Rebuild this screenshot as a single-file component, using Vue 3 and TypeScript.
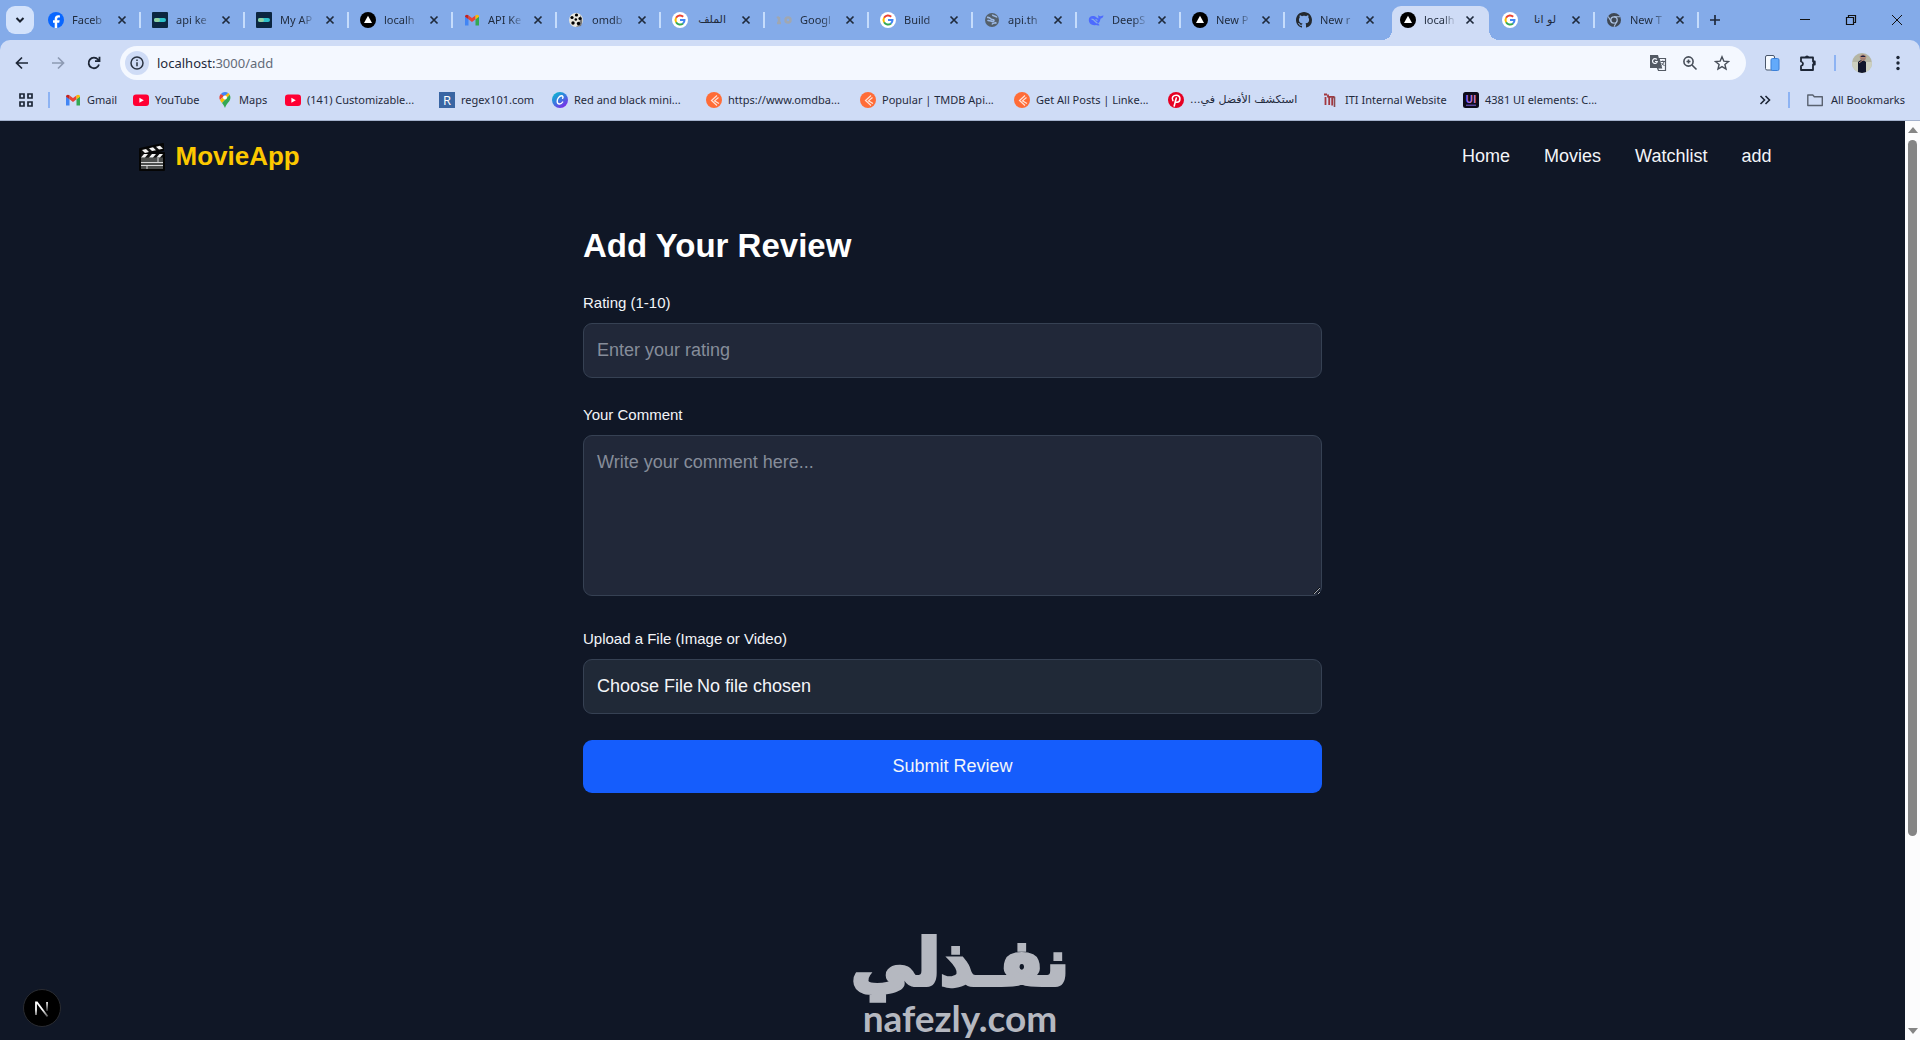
<script setup lang="ts">
import { ref } from 'vue'

interface Tab {
  title: string
  icon: string
  active?: boolean
  rtl?: boolean
}

interface Bookmark {
  title: string
  icon: string
  width: number
  rtl?: boolean
}

const tabs: Tab[] = [
  { title: 'Faceb', icon: 'facebook' },
  { title: 'api ke', icon: 'tmdb' },
  { title: 'My AP', icon: 'tmdb' },
  { title: 'localh', icon: 'vercel' },
  { title: 'API Ke', icon: 'gmail' },
  { title: 'omdb', icon: 'reel' },
  { title: 'الملف', icon: 'google', rtl: true },
  { title: 'Googl', icon: 'faded' },
  { title: 'Build', icon: 'google' },
  { title: 'api.th', icon: 'globe' },
  { title: 'DeepS', icon: 'whale' },
  { title: 'New P', icon: 'vercel' },
  { title: 'New r', icon: 'github' },
  { title: 'localh', icon: 'vercel', active: true },
  { title: 'لو انا', icon: 'google', rtl: true },
  { title: 'New T', icon: 'chrome' },
]

const bookmarks: Bookmark[] = [
  { title: 'Gmail', icon: 'gmail', width: 68 },
  { title: 'YouTube', icon: 'youtube', width: 84 },
  { title: 'Maps', icon: 'maps', width: 68 },
  { title: '(141) Customizable...', icon: 'youtube', width: 154 },
  { title: 'regex101.com', icon: 'regex', width: 113 },
  { title: 'Red and black mini...', icon: 'canva', width: 154 },
  { title: 'https://www.omdba...', icon: 'postman', width: 154 },
  { title: 'Popular | TMDB Api...', icon: 'postman', width: 154 },
  { title: 'Get All Posts | Linke...', icon: 'postman', width: 154 },
  { title: 'استكشف الأفضل في...', icon: 'pinterest', width: 155, rtl: true },
  { title: 'ITI Internal Website', icon: 'iti', width: 140 },
  { title: '4381 UI elements: C...', icon: 'uiverse', width: 154 },
]

const icons: Record<string, string> = {
  facebook:
    '<circle cx="8" cy="8" r="8" fill="#0866ff"/><path d="M6.7 16v-5.300H5V8.200h1.700V7.100C6.700 4.400 7.900 3.200 10.400 3.200c.5 0 1.100.1 1.500.2v2.200h-1c-1.300 0-1.700.5-1.700 1.600v1h2.500l-.5 2.500h-2V16z" fill="#fff"/>',
  tmdb:
    '<rect width="16" height="16" rx="1" fill="#0b2540"/><rect x="2" y="6" width="12" height="4" rx="2" fill="#2ec0c9"/><rect x="2" y="6" width="6" height="4" rx="2" fill="#90cea1"/>',
  vercel: '<circle cx="8" cy="8" r="8" fill="#000"/><path d="M8 3.800 12 11H4z" fill="#fff"/>',
  gmail:
    '<path d="M1 13.500V4.500l3.500 2.600v6.400z" fill="#4285f4"/><path d="M11.500 13.500V7.100L15 4.500v9z" fill="#34a853"/><path d="M4.500 7.300V3.500L8 6.100l3.500-2.600v3.800L8 9.900z" fill="#ea4335"/><path d="M1 4.500c0-1.700 2-2.500 3.500-1.200v3.900L1 4.700z" fill="#c5221f"/><path d="M15 4.500c0-1.700-2-2.500-3.500-1.200v3.900L15 4.700z" fill="#fbbc04"/>',
  reel:
    '<circle cx="8" cy="8" r="7" fill="#e8e6de"/><path d="M12 3q4 5 1 11l-5 1q5-4 4-12z" fill="#777"/><circle cx="4" cy="5.500" r="1.600"/><circle cx="8.500" cy="3" r="1.600"/><circle cx="7.800" cy="7.500" r="1.300"/><circle cx="12" cy="6.500" r="1.600"/><circle cx="5" cy="11" r="1.700"/><circle cx="10.500" cy="11.500" r="1.700"/>',
  google:
    '<circle cx="8" cy="8" r="8" fill="#fff"/><g fill="none" stroke-width="2"><path d="M11.200 4.800A4.500 4.500 0 0 0 4.100 5.800" stroke="#ea4335"/><path d="M4.100 5.800a4.500 4.500 0 0 0 0 4.400" stroke="#fbbc05"/><path d="M4.100 10.200a4.500 4.500 0 0 0 6.900 1.200" stroke="#34a853"/><path d="M8 8h4.500a4.500 4.500 0 0 1-1.500 3.400" stroke="#4285f4"/></g>',
  faded:
    '<g fill="none" stroke="#a7a7a4" stroke-width="2.500" opacity=".8"><path d="M3 5v6M1 6l2-1M1 11h4"/><circle cx="12" cy="8" r="2.500"/></g>',
  globe:
    '<circle cx="8" cy="8" r="7" fill="#54606b"/><path d="M3 5.500c2-.5 3 .5 4 1.500s3 0 3 1.500-2 1-3 .5-2.500 0-3.500-.8M8.500 2.500c0 2 3.500 1 4.500 3M8 12.500c1-2 3-1 4.500-2" stroke="#9cb9e6" stroke-width="1.600" fill="none"/>',
  whale:
    '<path d="M.8 8C.8 4.800 3 3.500 6 4c2 .4 2.500 2 4.500 2.500 0-1.500-.5-2-.3-3.500.8 1 1.800 1.500 2.800 1.200.8-.3 1.500-.8 2.500-.7-.3 1.800-1.500 3-3 3.200-.3 2.300-1.200 4-2.500 5 .8.300 1.200.8 1.500 1.500-1.200.4-2.500.2-3.500-.2C4 14 .8 11.500.8 8z" fill="#4d6bfe"/><path d="M3.500 7.200c3 0 4 3.500 6 4M7.500 7.500c1 0 1.500.5 1.800 1.300" stroke="#84abe9" stroke-width="1.200" fill="none"/>',
  github:
    '<path fill="#24292f" d="M8 0C3.580 0 0 3.580 0 8c0 3.540 2.290 6.530 5.470 7.590.4.070.55-.17.55-.38 0-.19-.01-.82-.01-1.490-2.010.37-2.530-.49-2.690-.94-.09-.23-.48-.94-.82-1.130-.28-.15-.68-.52-.01-.53.63-.01 1.080.58 1.230.82.72 1.210 1.870.87 2.330.66.070-.52.280-.87.510-1.070-1.780-.2-3.640-.89-3.640-3.950 0-.87.310-1.590.82-2.150-.08-.2-.36-1.020.080-2.120 0 0 .67-.21 2.200.82.640-.18 1.320-.27 2-.27s1.360.09 2 .27c1.530-1.040 2.200-.82 2.200-.82.440 1.100.160 1.920.080 2.120.510.560.820 1.270.820 2.150 0 3.070-1.870 3.750-3.650 3.950.290.250.540.730.540 1.480 0 1.070-.01 1.930-.01 2.200 0 .21.150.46.550.38A8.010 8.010 0 0 0 16 8c0-4.420-3.580-8-8-8z"/>',
  chrome:
    '<circle cx="8" cy="8" r="7" fill="#3f4854"/><circle cx="8" cy="8" r="3.200" fill="none" stroke="#a9bfdf" stroke-width="1.300"/><path d="M8 4.800h6M5.200 9.600 2.200 4.500M10.800 9.600 8 14.800" stroke="#a9bfdf" stroke-width="1.100"/>',
  youtube: '<rect y="2.500" width="16" height="11.500" rx="3" fill="#ff0033"/><path d="M6.400 5.700 10.800 8.200 6.400 10.700z" fill="#fff"/>',
  maps:
    '<path d="M8 0a5.500 5.500 0 0 0-4.200 2L8 5.500l3.200-4.400A5.500 5.500 0 0 0 8 0z" fill="#4285f4"/><path d="M3.800 2A5.500 5.500 0 0 0 3 8l4-4z" fill="#ea4335"/><path d="M3 8c.5 1.200 1.200 2 2 3l7.800-8.300A5.500 5.500 0 0 0 11.200 1.100z" fill="#fbbc04"/><path d="M5 11c1.500 2 2.200 3 3 5 .8-2.500 1.500-3.500 3-5.300 2.300-2.500 3.200-4.700 1.800-8z" fill="#34a853"/><circle cx="8" cy="5.400" r="2" fill="#fff"/>',
  regex:
    '<rect width="16" height="16" fill="#3965a3"/><text x="8" y="13" text-anchor="middle" font-family="Open Sans, sans-serif" font-size="13" fill="#fff">R</text>',
  canva:
    '<defs><linearGradient id="cv" x1="0" y1="0" x2=".7" y2="1"><stop offset="0" stop-color="#00c4cc"/><stop offset=".55" stop-color="#3a78e0"/><stop offset="1" stop-color="#7d2ae8"/></linearGradient></defs><circle cx="8" cy="8" r="8" fill="url(#cv)"/><path d="M10.600 6.300c.8-1 .4-2.500-1.100-2.500-2.200 0-4.300 3-4.300 5.400 0 3.800 3.800 3.500 5.500.8" fill="none" stroke="#fff" stroke-width="1.400" stroke-linecap="round"/>',
  postman:
    '<circle cx="8" cy="8" r="8" fill="#ff6c37"/><path d="M11 3.500 5.500 8.500l5.500 5M12.500 5.500 8.500 8.800l4.500 2.700" fill="none" stroke="#ffe3d8" stroke-width="1.200"/>',
  pinterest:
    '<circle cx="8" cy="8" r="8" fill="#e60023"/><path d="M4.900 8.600C3 5.200 5.500 3.300 8.200 3.300c5.300 0 4.300 7 .8 7-1 0-1.600-.6-1.700-1.200M8.300 6 6.200 14" fill="none" stroke="#fff" stroke-width="1.600" stroke-linecap="round"/>',
  iti:
    '<path d="M2.500 5v8M1 2.500h3M5 4.800h6.500M6.200 5v8M9.200 6v7.500M5 2.500v3" fill="none" stroke="#a2373f" stroke-width="1.800"/><path d="M8.500 5.500h3v9.500" fill="none" stroke="#8b4a50" stroke-width="1.600"/>',
  uiverse:
    '<defs><linearGradient id="uv" x1="0" x2="1"><stop offset="0" stop-color="#8a63ff"/><stop offset="1" stop-color="#e07fb0"/></linearGradient></defs><rect width="16" height="16" rx="2.500" fill="#0d0b1a"/><text x="8" y="11" text-anchor="middle" font-family="Open Sans, sans-serif" font-weight="700" font-size="10" fill="url(#uv)">UI</text><path d="M3 13.200h10" stroke="#7a63d8" stroke-width="1"/>',
}

const links = ['Home', 'Movies', 'Watchlist', 'add']
const rating = ref('')
const comment = ref('')
</script>

<template>
  <div class="window">
    <header class="chrome">
      <div class="tabstrip">
        <button class="tab-search" aria-label="Search tabs">
          <svg width="16" height="16" viewBox="0 0 16 16"><path d="M4.500 6 8 9.500 11.500 6" fill="none" stroke="#1a2230" stroke-width="2" /></svg>
        </button>
        <div class="tabs">
          <div
            v-for="(tab, i) in tabs"
            :key="i"
            class="tab"
            :class="{ active: tab.active, bare: tab.active || tabs[i + 1]?.active }"
          >
            <svg class="favicon" width="16" height="16" viewBox="0 0 16 16" v-html="icons[tab.icon]"></svg>
            <span class="tab-title" :class="{ rtl: tab.rtl }" :dir="tab.rtl ? 'rtl' : 'ltr'">{{ tab.title }}</span>
            <button class="tab-close" aria-label="Close tab">
              <svg width="10" height="10" viewBox="0 0 10 10"><path d="M1.500 1.500l7 7M8.500 1.500l-7 7" stroke="#1f2a3c" stroke-width="1.700" /></svg>
            </button>
          </div>
        </div>
        <button class="new-tab" aria-label="New tab">
          <svg width="12" height="12" viewBox="0 0 12 12"><path d="M6 1v10M1 6h10" stroke="#1f2a3c" stroke-width="1.700" /></svg>
        </button>
        <div class="window-controls">
          <button aria-label="Minimize"><svg width="12" height="12" viewBox="0 0 12 12"><path d="M1 5.500h10" stroke="#111" /></svg></button>
          <button aria-label="Restore"><svg width="12" height="12" viewBox="0 0 12 12"><path d="M1.500 3.500h7v7h-7zM3.500 3.500v-2h7v7h-2" fill="none" stroke="#111" stroke-width="1.200" /></svg></button>
          <button aria-label="Close window"><svg width="12" height="12" viewBox="0 0 12 12"><path d="M1 1l10 10M11 1 1 11" stroke="#111" /></svg></button>
        </div>
      </div>

      <div class="toolbar">
        <button class="tool" aria-label="Back"><svg width="16" height="16" viewBox="0 0 16 16"><path d="M14 8H3M8 2.500 2.500 8 8 13.500" fill="none" stroke="#1d2636" stroke-width="1.700" /></svg></button>
        <button class="tool" aria-label="Forward"><svg width="16" height="16" viewBox="0 0 16 16"><path d="M2 8h11M8 2.500 13.500 8 8 13.500" fill="none" stroke="#8d9ab3" stroke-width="1.700" /></svg></button>
        <button class="tool" aria-label="Reload"><svg width="16" height="16" viewBox="0 0 16 16"><path d="M13 9.500A5.300 5.300 0 1 1 12 4.500l1.500 1.500M13.500 1.800V6.200H9" fill="none" stroke="#1d2636" stroke-width="1.800" /></svg></button>
        <div class="omnibox">
          <button class="site-info" aria-label="Site information">
            <svg width="16" height="16" viewBox="0 0 16 16"><circle cx="8" cy="8" r="6" fill="none" stroke="#2b3442" stroke-width="1.500" /><path d="M8 7.200v4M8 4.500v1.600" stroke="#2b3442" stroke-width="1.500" /></svg>
          </button>
          <span class="url">localhost:<span class="path">3000/add</span></span>
          <button class="tool action" aria-label="Translate this page">
            <svg width="18" height="18" viewBox="0 0 18 18"><path d="M1 1h8l3.500 13H1z" fill="#535a64" /><path d="M7.800 5.500a2.400 2.400 0 1 0 .5 2H6" fill="none" stroke="#f4f8ff" stroke-width="1.200" /><path d="M10 4.500h6.500v12H9.500l-1-2.500h4z" fill="#f4f8ff" stroke="#535a64" stroke-width="1.200" /><path d="M11.500 7.500h4.500M13.800 6.500v1M15 7.500c-.5 2-1.500 3-2.500 4M12.500 9l3 3" stroke="#535a64" fill="none" /></svg>
          </button>
          <button class="tool action" aria-label="Zoom">
            <svg width="16" height="16" viewBox="0 0 16 16"><circle cx="6.500" cy="6.500" r="4.600" fill="none" stroke="#474e59" stroke-width="1.600" /><path d="M10 10l4.500 4.500M6.500 4.500v4M4.500 6.500h4" stroke="#474e59" stroke-width="1.600" /></svg>
          </button>
          <button class="tool action" aria-label="Bookmark this tab">
            <svg width="16" height="16" viewBox="0 0 16 16"><path d="M8 1.800l1.800 4.300 4.700.4-3.600 3 1.100 4.600L8 11.600l-4 2.500 1.100-4.600-3.600-3 4.700-.4z" fill="none" stroke="#474e59" stroke-width="1.400" /></svg>
          </button>
        </div>
        <div class="extensions">
          <button class="tool" aria-label="Extension"><svg width="16" height="18" viewBox="0 0 16 18"><rect x="1.500" y="1.500" width="9" height="14.500" rx="1.500" fill="#f6faff" stroke="#49566b" /><rect x="7" y="4.500" width="8" height="12" rx="1.500" fill="#63aafa" stroke="#3c80d8" /></svg></button>
          <button class="tool" aria-label="Extensions"><svg width="18" height="18" viewBox="0 0 18 18"><path d="M2 3.500h12v4h1.800v3H14V16H2v-4q2-.5 2-2.200T2 7.500z" fill="none" stroke="#1d2636" stroke-width="1.800" stroke-linejoin="round" /><path d="M6 3.500a2 2 0 0 1 4 0zM14 7.200a2 2 0 0 1 0 4z" fill="#1d2636" /></svg></button>
          <span class="divider"></span>
          <button class="tool" aria-label="Profile"><svg width="20" height="20" viewBox="0 0 20 20"><defs><clipPath id="av"><circle cx="10" cy="10" r="10" /></clipPath></defs><g clip-path="url(#av)"><rect width="20" height="20" fill="#b5b6a4" /><path d="M0 9h20v11H0z" fill="#cdd0c0" /><path d="M6 20V9q4-4 8 0v11z" fill="#11162b" /><circle cx="11" cy="5" r="2.800" fill="#a47f72" /><path d="M8 4.500C8 1 14 1 14 4.500zM7 10l4-3" fill="#1b2040" stroke="#b98a78" /></g></svg></button>
          <button class="tool" aria-label="Menu"><svg width="16" height="16" viewBox="0 0 16 16" fill="#1d2636"><circle cx="8" cy="2.500" r="1.700" /><circle cx="8" cy="8" r="1.700" /><circle cx="8" cy="13.500" r="1.700" /></svg></button>
        </div>
      </div>

      <nav class="bookmarks" aria-label="Bookmarks">
        <button class="apps" aria-label="Apps"><svg width="16" height="16" viewBox="0 0 16 16"><path d="M2 2h4v4H2zM10 2h4v4h-4zM2 10h4v4H2zM10 10h4v4h-4z" fill="none" stroke="#1d2636" stroke-width="1.700" /></svg></button>
        <span class="divider"></span>
        <div class="bookmark-list">
          <a v-for="b in bookmarks" :key="b.title" href="#" class="bookmark" :style="{ width: b.width + 'px' }">
            <svg class="favicon" width="16" height="16" viewBox="0 0 16 16" v-html="icons[b.icon]"></svg>
            <span :dir="b.rtl ? 'rtl' : 'ltr'" :class="{ arabic: b.rtl }">{{ b.title }}</span>
          </a>
        </div>
        <button class="more" aria-label="More bookmarks"><svg width="12" height="12" viewBox="0 0 12 12"><path d="M1.500 2 5.500 6l-4 4M6.500 2l4 4-4 4" fill="none" stroke="#1d2636" stroke-width="1.600" /></svg></button>
        <span class="divider"></span>
        <a href="#" class="bookmark all">
          <svg class="favicon" width="16" height="16" viewBox="0 0 16 16"><path d="M.8 3h5l1.500 1.800h8V13.500H.8z" fill="none" stroke="#5a6270" stroke-width="1.400" stroke-linejoin="round" /></svg>
          <span>All Bookmarks</span>
        </a>
      </nav>
    </header>

    <div class="viewport">
      <div class="page">
        <header class="site-header">
          <div class="site-bar">
            <a href="#" class="brand">
              <svg width="28" height="30" viewBox="0 0 28 30">
                <path d="M2 7 25 2v6L2 13zM2 11h24v17H2z" fill="#0b0b0b" stroke="#050505" stroke-width="2" stroke-linejoin="round" />
                <path d="M3 13h22v14H3z" fill="#4b4d4c" />
                <path d="M3 8 25 3.500v3.500L3 12zM3 12h22v3.500H3z" fill="#111" />
                <path d="M4 8l4-1 3 3-4 1zM11 6.300l4-1 3 3-4 .8zM18 4.800l4-1 3 3-4 .7zM6 12h4l-3 3.500H3zM14 12h4l-3 3.500h-4zM21.500 12h3.500l-3 3.500h-3.500z" fill="#f3f3f3" />
                <path d="M3 20.500h22M3 23.500h22M20 16v4.500M9 23.500V27" stroke="#d8d8d8" />
              </svg>
              <span>MovieApp</span>
            </a>
            <nav class="links">
              <a v-for="link in links" :key="link" href="#">{{ link }}</a>
            </nav>
          </div>
        </header>

        <main class="review">
          <h1>Add Your Review</h1>
          <form @submit.prevent>
            <div class="field">
              <label for="rating">Rating (1-10)</label>
              <input id="rating" v-model="rating" type="text" inputmode="numeric" placeholder="Enter your rating" />
            </div>
            <div class="field comment">
              <label for="comment">Your Comment</label>
              <textarea id="comment" v-model="comment" placeholder="Write your comment here..."></textarea>
            </div>
            <div class="field">
              <label for="file">Upload a File (Image or Video)</label>
              <input id="file" type="file" accept="image/*,video/*" />
            </div>
            <button type="submit" class="submit">Submit Review</button>
          </form>
        </main>

        <button class="dev-badge" aria-label="Open Next.js Dev Tools">
          <svg width="38" height="38" viewBox="0 0 38 38">
            <defs>
              <linearGradient id="nd" gradientUnits="userSpaceOnUse" x1="0" y1="13" x2="0" y2="28"><stop offset=".5" stop-color="#fff" /><stop offset="1" stop-color="#fff" stop-opacity=".3" /></linearGradient>
              <linearGradient id="nv" gradientUnits="userSpaceOnUse" x1="0" y1="13" x2="0" y2="22"><stop offset="0" stop-color="#fff" /><stop offset="1" stop-color="#fff" stop-opacity=".2" /></linearGradient>
            </defs>
            <circle cx="19" cy="19" r="18.500" fill="#000" stroke="#2a2c31" />
            <path d="M13 26V13.500h1L24.500 27.500" fill="none" stroke="url(#nd)" stroke-width="1.800" />
            <path d="M23.200 13h1.700v9h-1.700z" fill="url(#nv)" />
          </svg>
        </button>

        <div class="watermark">
          <span class="mark-ar" dir="rtl">نفـذلي</span>
          <span class="mark-en">nafezly.com</span>
        </div>
      </div>

      <div class="scrollbar" aria-hidden="true">
        <svg width="10" height="6" viewBox="0 0 10 6"><path d="M5 0l5 6H0z" fill="#858585" /></svg>
        <div class="track"><div class="thumb"></div></div>
        <svg width="10" height="6" viewBox="0 0 10 6"><path d="M5 6 0 0h10z" fill="#858585" /></svg>
      </div>
    </div>
  </div>
</template>

<style>
body {
  margin: 0;
  overflow: hidden;
}
</style>

<style scoped>
* {
  box-sizing: border-box;
}

button {
  border: 0;
  padding: 0;
  background: none;
  font: inherit;
  color: inherit;
  display: flex;
  align-items: center;
  justify-content: center;
}

a {
  color: inherit;
  text-decoration: none;
}

svg {
  display: block;
  flex: none;
}

.window {
  height: 100vh;
  display: flex;
  flex-direction: column;
  font-family: "Liberation Sans", Arial, sans-serif;
}

/* Browser frame */
.chrome {
  flex: none;
  background: #84abe9;
  border-bottom: 1px solid #a3b1cc;
  font-family: "Noto Sans", "Open Sans", "DejaVu Sans", sans-serif;
  font-size: 11px;
  color: #1f2a3c;
}

.tabstrip {
  height: 40px;
  display: flex;
  align-items: center;
}

.tab-search {
  width: 28px;
  height: 28px;
  margin: 0 6px;
  border-radius: 9px;
  background: #d3e2fb;
}

.tabs {
  display: flex;
  align-self: stretch;
}

.tab {
  width: 104px;
  display: flex;
  align-items: center;
  padding-left: 8px;
}

.tab::after {
  content: "";
  width: 2px;
  height: 16px;
  margin-left: 12px;
  background: #c5dcfc;
}

.tab.bare::after {
  background: transparent;
}

.tab.active {
  width: 97px;
  margin: 6px 5px 0 0;
  padding-bottom: 6px;
  border-radius: 9px 9px 0 0;
  background: #cfdcf6;
  position: relative;
}

.tab.active::before {
  content: "";
  position: absolute;
  left: -10px;
  right: -10px;
  bottom: 0;
  height: 10px;
  background:
    radial-gradient(circle at 0 0, transparent 10px, #cfdcf6 10px) left / 10px 10px no-repeat,
    radial-gradient(circle at 100% 0, transparent 10px, #cfdcf6 10px) right / 10px 10px no-repeat;
}

.tab-title {
  width: 36px;
  margin-left: 8px;
  white-space: nowrap;
  line-height: 18px;
  mask-image: linear-gradient(to right, #000 60%, transparent);
}

.tab-title.rtl {
  width: 30px;
  margin-right: 6px;
  font-family: "DejaVu Sans", sans-serif;
  mask-image: none;
}

.tab-close {
  flex: none;
  margin-left: 9px;
}

.new-tab {
  margin-left: 7px;
}

.window-controls {
  margin-left: auto;
  display: flex;
}

.window-controls button {
  width: 46px;
  height: 40px;
}

.toolbar {
  height: 46px;
  display: flex;
  align-items: center;
  padding: 0 12px;
  background: #cfdcf6;
  border-radius: 10px 10px 0 0;
}

.tool {
  width: 20px;
  height: 20px;
  margin-right: 16px;
}

.omnibox {
  flex: 1;
  height: 34px;
  display: flex;
  align-items: center;
  padding: 0 14px 0 5px;
  border-radius: 17px;
  background: #f4f8ff;
}

.site-info {
  width: 24px;
  height: 24px;
  border-radius: 50%;
  background: #cfdcf6;
}

.url {
  flex: 1;
  margin-left: 8px;
  font-size: 13px;
}

.path {
  color: #636b78;
}

.action {
  margin: 0 0 0 12px;
}

.extensions {
  display: flex;
  align-items: center;
  margin-left: 16px;
}

.extensions .tool:last-child {
  margin-right: 0;
}

.divider {
  width: 2px;
  height: 16px;
  background: #8db3f3;
}

.extensions .divider {
  margin-right: 16px;
}

.bookmarks {
  height: 34px;
  display: flex;
  align-items: center;
  padding: 0 15px 6px 18px;
  background: #cfdcf6;
}

.apps {
  margin-right: 14px;
}

.bookmark-list {
  flex: 1;
  min-width: 0;
  display: flex;
  overflow: hidden;
  margin-left: 15px;
}

.bookmark {
  flex: none;
  display: flex;
  align-items: center;
  gap: 6px;
  line-height: 16px;
  white-space: nowrap;
}

.arabic {
  font-family: "DejaVu Sans", sans-serif;
}

.more {
  margin-right: 17px;
}

.all {
  margin-left: 17px;
  gap: 8px;
}

/* Web page */
.viewport {
  flex: 1;
  min-height: 0;
  display: flex;
}

.page {
  flex: 1;
  min-width: 0;
  position: relative;
  overflow: hidden;
  background: #101726;
  color: #f3f5f9;
  font-size: 18px;
}

.site-bar {
  max-width: 1690px;
  margin: 0 auto;
  padding: 18px 26px;
  display: flex;
  align-items: center;
  justify-content: space-between;
}

.brand {
  display: flex;
  align-items: center;
  gap: 10px;
  margin-left: 4px;
  font-size: 26px;
  line-height: 35px;
  font-weight: 700;
  color: #fcc800;
}

.links {
  display: flex;
  gap: 34px;
}

.review {
  max-width: 739px;
  margin: 0 auto;
  padding-top: 34px;
}

h1 {
  margin: 0 0 26px;
  font-size: 33px;
  line-height: 40px;
  font-weight: 700;
  color: #fff;
}

form {
  display: flex;
  flex-direction: column;
  gap: 26px;
}

.field {
  display: flex;
  flex-direction: column;
  gap: 9px;
}

.comment {
  padding-bottom: 6px;
}

label {
  font-size: 15px;
  line-height: 22px;
}

input,
textarea {
  width: 100%;
  height: 55px;
  margin: 0;
  padding: 13px;
  border: 1px solid #364153;
  border-radius: 9px;
  background: #212839;
  color: #f3f5f9;
  font: inherit;
  line-height: 27px;
}

textarea {
  height: 161px;
  resize: vertical;
}

input::placeholder,
textarea::placeholder {
  color: #868d9a;
}

input[type="file"] {
  background: #202937;
}

input::file-selector-button {
  margin: 0 4px 0 0;
  padding: 0;
  border: 0;
  background: transparent;
  color: inherit;
  font: inherit;
}

.submit {
  height: 53px;
  border-radius: 9px;
  background: #155dfc;
}

.dev-badge {
  position: absolute;
  left: 23px;
  bottom: 13px;
}

/* Site logo laid over the foot of the page */
.watermark {
  position: absolute;
  left: 0;
  right: 0;
  bottom: 4px;
  padding-left: 15px;
  display: flex;
  flex-direction: column;
  align-items: center;
  color: #b5b8c0;
  font-family: "DejaVu Sans", sans-serif;
  font-weight: 700;
}

.mark-ar {
  font-size: 64px;
  line-height: 74px;
  -webkit-text-stroke: 4px #b5b8c0;
  stroke-linejoin: round;
}

.mark-en {
  font-family: "Lato", sans-serif;
  font-size: 37px;
  line-height: 36px;
}

.scrollbar {
  flex: none;
  width: 15px;
  display: flex;
  flex-direction: column;
  align-items: center;
  gap: 7px;
  padding: 6px 0;
  background: #fcfcfd;
}

.track {
  flex: 1;
}

.thumb {
  width: 9px;
  height: 79%;
  border-radius: 5px;
  background: #858585;
}
</style>
